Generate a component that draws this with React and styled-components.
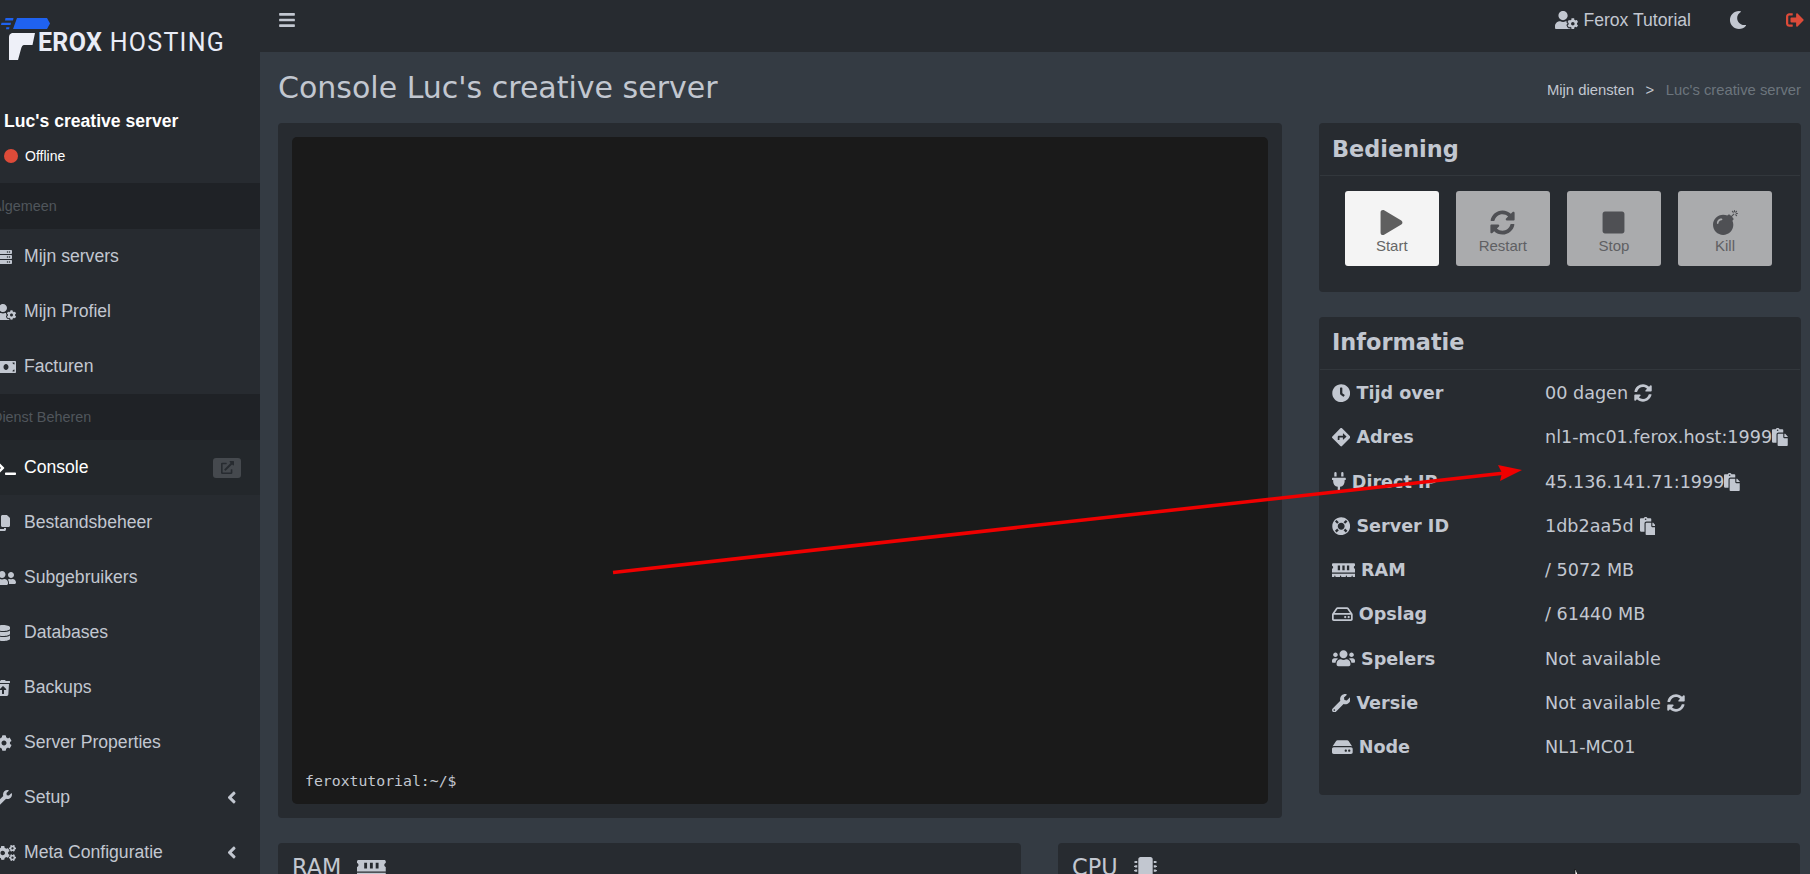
import styled, { createGlobalStyle } from "styled-components";
import {
  FaAngleLeft, FaBars, FaBomb, FaClock, FaCog, FaCogs, FaDatabase, FaDirections, FaExternalLinkAlt, FaHdd,
  FaLifeRing, FaMemory, FaMicrochip, FaMoneyBill, FaMoon, FaPaste, FaPlay, FaPlug,
  FaRegHdd, FaServer, FaSignOutAlt, FaStop, FaSyncAlt, FaTerminal, FaTrashRestore, FaUserCog,
  FaUserFriends, FaUsers, FaWrench,
} from "react-icons/fa";
import { FaCopy } from "react-icons/fa6";

const GlobalStyle = createGlobalStyle`
  html, body {
    margin: 0;
    height: 100%;
    overflow: hidden;
    background: #343b43;
  }
  * { box-sizing: border-box; }
`;

// ratio = width of the font awesome glyph, in em (the icons are 1em wide by default)
const menuGeneral = [
  { label: "Mijn servers", icon: FaServer },
  { label: "Mijn Profiel", icon: FaUserCog, ratio: 1.25 },
  { label: "Facturen", icon: FaMoneyBill, ratio: 1.25 },
];

const menuService = [
  { label: "Console", icon: FaTerminal, ratio: 1.25, active: true },
  { label: "Bestandsbeheer", icon: FaCopy, ratio: 0.875 },
  { label: "Subgebruikers", icon: FaUserFriends, ratio: 1.25 },
  { label: "Databases", icon: FaDatabase, ratio: 0.875 },
  { label: "Backups", icon: FaTrashRestore, ratio: 0.875 },
  { label: "Server Properties", icon: FaCog },
  { label: "Setup", icon: FaWrench, arrow: true },
  { label: "Meta Configuratie", icon: FaCogs, ratio: 1.25, arrow: true },
];

const controls = [
  { label: "Start", icon: FaPlay, enabled: true },
  { label: "Restart", icon: FaSyncAlt },
  { label: "Stop", icon: FaStop },
  { label: "Kill", icon: FaBomb },
];

const info = [
  { label: "Tijd over", icon: FaClock, value: "00 dagen", extra: FaSyncAlt, gap: 6 },
  { label: "Adres", icon: FaDirections, value: "nl1-mc01.ferox.host:1999", extra: FaPaste, extraRatio: 0.875 },
  { label: "Direct IP", icon: FaPlug, ratio: 0.75, value: "45.136.141.71:1999", extra: FaPaste, extraRatio: 0.875 },
  { label: "Server ID", icon: FaLifeRing, value: "1db2aa5d", extra: FaPaste, extraRatio: 0.875, gap: 6 },
  { label: "RAM", icon: FaMemory, ratio: 1.25, value: "/ 5072 MB" },
  { label: "Opslag", icon: FaRegHdd, ratio: 1.125, value: "/ 61440 MB" },
  { label: "Spelers", icon: FaUsers, ratio: 1.25, value: "Not available" },
  { label: "Versie", icon: FaWrench, value: "Not available", extra: FaSyncAlt, gap: 6 },
  { label: "Node", icon: FaHdd, ratio: 1.125, value: "NL1-MC01" },
];

function App() {
  return (
    <>
      <GlobalStyle />
      <Page>
        <Sidebar>
          <Logo>
            <svg width="52" height="42" viewBox="0 0 52 42">
              <path d="M17 0H47L50 5.5L47 11H13Z" fill="#1f62f0" />
              <path d="M5.5 0H13.5L13 2.5H5ZM1.5 4.7H11L10.5 7H1ZM6.3 9.3H9.5L9 11.3H6Z" fill="#1f62f0" />
              <path d="M12 15Q13 15 15 15H35L32.5 27H24Q22 27 21 31L18 42H9V19Q9 16 12 15Z" fill="#eef0f8" />
            </svg>
            <LogoText><b>EROX</b> HOSTING</LogoText>
          </Logo>
          <ServerName>Luc's creative server</ServerName>
          <ServerStatus><StatusDot />Offline</ServerStatus>
          <MenuHeader>Algemeen</MenuHeader>
          {menuGeneral.map((m) => <MenuItem key={m.label} {...m} />)}
          <MenuHeader>Dienst Beheren</MenuHeader>
          {menuService.map((m) => <MenuItem key={m.label} {...m} />)}
        </Sidebar>

        <Main>
          <Topbar>
            <BarsIcon><FaBars /></BarsIcon>
            <TopRight>
              <UserName><FaUserCog />Ferox Tutorial</UserName>
              <MoonIcon><FaMoon /></MoonIcon>
              <LogoutIcon><FaSignOutAlt /></LogoutIcon>
            </TopRight>
          </Topbar>

          <Content>
            <TitleRow>
              <PageTitle>Console Luc's creative server</PageTitle>
              <Breadcrumb>
                Mijn diensten<Separator>&gt;</Separator><Muted>Luc's creative server</Muted>
              </Breadcrumb>
            </TitleRow>

            <TopGrid>
              <ConsoleCard>
                <Terminal>feroxtutorial:~/$</Terminal>
              </ConsoleCard>
              <SideColumn>
                <ControlCard>
                  <CardHeader>Bediening</CardHeader>
                  <ButtonRow>
                    {controls.map((c) => (
                      <PowerButton key={c.label} $enabled={c.enabled}>
                        <c.icon />
                        {c.label}
                      </PowerButton>
                    ))}
                  </ButtonRow>
                </ControlCard>
                <InfoCard>
                  <CardHeader $tight>Informatie</CardHeader>
                  <InfoList>
                    {info.map((row) => (
                      <InfoRow key={row.label}>
                        <InfoLabel $ratio={row.ratio}><row.icon />{row.label}</InfoLabel>
                        <InfoValue $gap={row.gap} $ratio={row.extraRatio}>
                          {row.value}
                          {row.extra && <row.extra />}
                        </InfoValue>
                      </InfoRow>
                    ))}
                  </InfoList>
                </InfoCard>
              </SideColumn>
            </TopGrid>

            <BottomGrid>
              <StatCard $ratio={1.25}>RAM<FaMemory /></StatCard>
              <StatCard>CPU<FaMicrochip /></StatCard>
            </BottomGrid>
          </Content>
        </Main>

        <ArrowOverlay width="1810" height="874" viewBox="0 0 1810 874">
          <line x1="613" y1="572.5" x2="1505" y2="473" stroke="#f00000" strokeWidth="3.6" />
          <path d="M1522 470L1498 465L1502 473L1500 481Z" fill="#f00000" />
        </ArrowOverlay>
        <Cursor width="10" height="8" viewBox="0 0 10 8">
          <path d="M1 0V8H5L2 1Z" fill="#fff" stroke="#111" strokeWidth="0.8" />
        </Cursor>
      </Page>
    </>
  );
}

function MenuItem({ label, icon: Icon, ratio, active, arrow }) {
  return (
    <MenuRow $active={active}>
      <MenuIcon $ratio={ratio}><Icon /></MenuIcon>
      {label}
      {active && <EditBadge><FaExternalLinkAlt /></EditBadge>}
      {arrow && <MenuArrow><FaAngleLeft /></MenuArrow>}
    </MenuRow>
  );
}

const Page = styled.div`
  position: relative;
  display: flex;
  width: 1810px;
  height: 874px;
  overflow: hidden;
  font-family: "Liberation Sans", Arial, sans-serif;
  color: #c2c7d0;
`;

const Sidebar = styled.aside`
  flex: 0 0 260px;
  background: #272b30;
  overflow: hidden;
`;

const Logo = styled.div`
  display: flex;
  align-items: flex-end;
  height: 60px;
  padding-top: 18px;
  color: #e9ecf6;
  svg { flex: none; margin-right: -15px; }
`;

const LogoText = styled.div`
  font-family: Roboto, sans-serif;
  font-size: 25px;
  line-height: 30px;
  letter-spacing: 1.3px;
  margin-bottom: 2px;
  margin-left: 1px;
  white-space: nowrap;
  b { font-weight: 700; letter-spacing: 0.3px; }
`;

const ServerName = styled.div`
  margin: 47px 0 0 4px;
  font-size: 17.6px;
  line-height: 28px;
  font-weight: 700;
  color: #fff;
`;

const ServerStatus = styled.div`
  display: flex;
  align-items: center;
  gap: 7px;
  margin: 12px 0 18px 4px;
  font-size: 14px;
  line-height: 18px;
  color: #fff;
`;

const StatusDot = styled.span`
  width: 14px;
  height: 14px;
  border-radius: 50%;
  background: #dd4b39;
`;

const MenuHeader = styled.div`
  height: 46px;
  font-size: 14.4px;
  line-height: 46px;
  color: #50565c;
  background: #1f2226;
  text-indent: -8px;
`;

const MenuRow = styled.div`
  display: flex;
  align-items: center;
  height: 55px;
  font-size: 17.6px;
  color: ${(p) => (p.$active ? "#fff" : "#c2c7d0")};
  background: ${(p) => (p.$active ? "#23272b" : "transparent")};
`;

const MenuIcon = styled.span`
  display: flex;
  flex: none;
  width: 28px;
  margin-left: -4px;
  font-size: 16px;
  svg { width: ${(p) => p.$ratio || 1}em; }
`;

const EditBadge = styled.span`
  display: flex;
  align-items: center;
  justify-content: center;
  width: 28px;
  height: 20px;
  margin-left: auto;
  margin-right: 19px;
  border-radius: 3px;
  background: #45494e;
  color: #272b30;
  font-size: 13px;
`;

const MenuArrow = styled.span`
  display: flex;
  margin-left: auto;
  margin-right: 24px;
  font-size: 19px;
  svg { width: 0.5em; }
`;

const Main = styled.main`
  flex: 1;
  display: flex;
  flex-direction: column;
  min-width: 0;
`;

const Topbar = styled.header`
  display: flex;
  align-items: center;
  justify-content: space-between;
  flex: 0 0 52px;
  padding: 0 6px 12px 18px;
  background: #272b30;
`;

const BarsIcon = styled.span`
  display: flex;
  font-size: 18px;
  color: #c2c7d0;
`;

const TopRight = styled.div`
  display: flex;
  align-items: center;
`;

const UserName = styled.span`
  display: flex;
  align-items: center;
  gap: 5px;
  font-size: 17.6px;
  svg { flex: none; font-size: 18.4px; width: 1.25em; }
`;

const MoonIcon = styled.span`
  display: flex;
  margin-left: 38px;
  font-size: 18px;
`;

const LogoutIcon = styled.span`
  display: flex;
  margin-left: 39px;
  font-size: 18px;
  color: #dd4b39;
`;

const Content = styled.div`
  flex: 1;
  padding: 0 9px 0 18px;
  min-height: 0;
`;

const TitleRow = styled.div`
  display: flex;
  align-items: center;
  justify-content: space-between;
  height: 71px;
`;

const PageTitle = styled.h1`
  margin: 0;
  font-family: "DejaVu Sans", sans-serif;
  font-size: 30px;
  font-weight: 400;
  color: #c2c7d0;
`;

const Breadcrumb = styled.div`
  margin-top: 4px;
  font-size: 14.8px;
  color: #c2c7d0;
`;

const Separator = styled.span`
  margin: 0 11.5px;
`;

const Muted = styled.span`
  color: #6c757d;
`;

const TopGrid = styled.div`
  display: grid;
  grid-template-columns: 1004px 482px;
  gap: 37px;
`;

const Card = styled.section`
  border-radius: 4px;
  background: #272b30;
`;

const ConsoleCard = styled(Card)`
  height: 695px;
  padding: 14px;
`;

const Terminal = styled.div`
  display: flex;
  align-items: flex-end;
  height: 100%;
  padding: 0 13px 14px;
  border-radius: 5px;
  background: #1a1a1a;
  font-family: "DejaVu Sans Mono", monospace;
  font-size: 14.8px;
  line-height: 18px;
  color: #c2c7d0;
`;

const SideColumn = styled.div`
  display: flex;
  flex-direction: column;
  gap: 25px;
`;

const ControlCard = styled(Card)`
  height: 169px;
`;

const InfoCard = styled(Card)`
  height: 478px;
`;

const CardHeader = styled.h3`
  height: 53px;
  margin: 0 1px;
  padding-left: 12px;
  border-bottom: 1px solid #32373c;
  font-family: "DejaVu Sans", sans-serif;
  font-size: 22.4px;
  line-height: ${(p) => (p.$tight ? "50px" : "52px")};
  font-weight: 700;
  color: #c2c7d0;
`;

const ButtonRow = styled.div`
  display: flex;
  gap: 17.6px;
  padding: 15px 0 0 26px;
`;

const PowerButton = styled.button`
  display: flex;
  flex-direction: column;
  align-items: center;
  justify-content: flex-end;
  width: 93.5px;
  height: 75px;
  padding: 0 0 12px;
  border: 0;
  border-radius: 3px;
  background: ${(p) => (p.$enabled ? "#f4f4f4" : "#aaabad")};
  font-family: "Liberation Sans", Arial, sans-serif;
  font-size: 15px;
  line-height: 16px;
  color: ${(p) => (p.$enabled ? "#666" : "#5f6063")};
  svg {
    flex: none;
    font-size: 25px;
    margin-bottom: 3px;
    color: ${(p) => (p.$enabled ? "#5f5f5f" : "#4f5054")};
  }
`;

const InfoList = styled.div`
  padding-top: 1px;
`;

const InfoRow = styled.div`
  display: flex;
  align-items: center;
  height: 44.25px;
  padding-left: 13px;
  font-family: "DejaVu Sans", sans-serif;
  font-size: 17.6px;
`;

const InfoLabel = styled.div`
  display: flex;
  align-items: center;
  gap: 6px;
  flex: 0 0 213px;
  font-weight: 700;
  color: #c2c7d0;
  svg { flex: none; font-size: 18.4px; width: ${(p) => p.$ratio || 1}em; }
`;

const InfoValue = styled.div`
  display: flex;
  align-items: center;
  gap: ${(p) => p.$gap || 0}px;
  white-space: nowrap;
  color: #c2c7d0;
  svg { flex: none; font-size: 18px; width: ${(p) => p.$ratio || 1}em; }
`;

const BottomGrid = styled.div`
  display: grid;
  grid-template-columns: 743px 742px;
  gap: 37px;
  margin-top: 25px;
`;

const StatCard = styled(Card)`
  display: flex;
  align-items: flex-start;
  gap: 16px;
  height: 80px;
  padding: 11px 14px;
  font-family: "DejaVu Sans", sans-serif;
  font-size: 22.4px;
  line-height: 26px;
  svg { flex: none; font-size: 23px; margin-top: 3px; width: ${(p) => p.$ratio || 1}em; }
`;

const ArrowOverlay = styled.svg`
  position: absolute;
  inset: 0;
  pointer-events: none;
`;

const Cursor = styled.svg`
  position: absolute;
  left: 1574px;
  top: 869px;
`;

export default App;
